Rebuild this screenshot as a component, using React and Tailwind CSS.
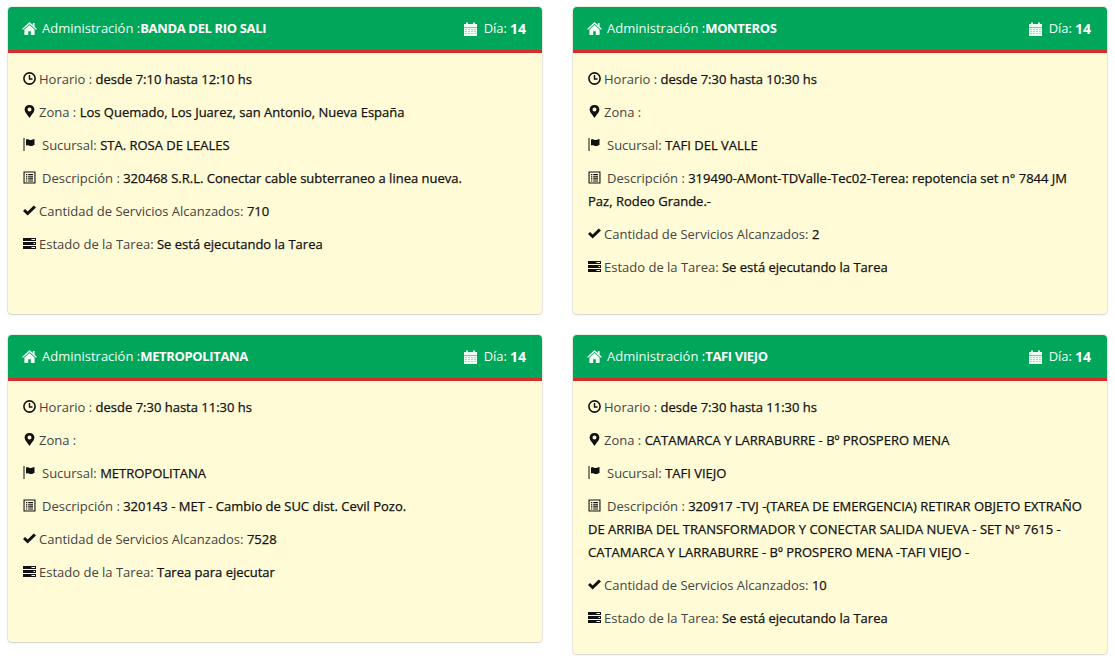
import React from 'react';

const Home = () => (
  <svg width="15" height="13" viewBox="0 0 15 13" className="shrink-0" fill="currentColor">
    <path d="M7.5 0 L10.8 3 V1 H12.6 V4.7 L15 6.9 L14 7.7 L7.5 1.9 L1 7.7 L0 6.9 Z" />
    <path d="M7.5 3 L12.6 7.6 V13 H8.8 V9.2 H6.2 V13 H2.4 V7.6 Z" />
  </svg>
);

const Calendar = () => (
  <svg width="13" height="14" viewBox="0 0 13 14" className="shrink-0">
    <path fill="currentColor" d="M0 2 H2 V0.5 H4 V2 H9 V0.5 H11 V2 H13 V5.2 H0 Z" />
    <path fill="currentColor" d="M0 5.8 H13 V14 H0 Z" />
    <path fill="#9fdcbc" d="M1 7 H3 V8 H1 Z M4 7 H6 V8 H4 Z M7 7 H9 V8 H7 Z M10 7 H12 V8 H10 Z M1 9 H3 V10 H1 Z M4 9 H6 V10 H4 Z M7 9 H9 V10 H7 Z M10 9 H12 V10 H10 Z M1 11 H3 V12 H1 Z M4 11 H6 V12 H4 Z M7 11 H9 V12 H7 Z M10 11 H12 V12 H10 Z" />
  </svg>
);

const Clock = () => (
  <svg width="13" height="13" viewBox="0 0 13 13" className="shrink-0" fill="none" stroke="currentColor">
    <circle cx="6.5" cy="6.5" r="5.6" strokeWidth="1.6" />
    <path d="M6.5 3 V7 H9.5" strokeWidth="1.4" />
  </svg>
);

const Marker = () => (
  <svg width="13" height="13" viewBox="0 0 13 13" className="shrink-0" fill="currentColor">
    <path fillRule="evenodd" d="M6.5 0 C9.4 0 11.4 2 11.4 4.6 C11.4 7.4 8 10.4 6.5 13 C5 10.4 1.6 7.4 1.6 4.6 C1.6 2 3.6 0 6.5 0 Z M6.5 2.6 A2 2 0 1 0 6.5 6.6 A2 2 0 1 0 6.5 2.6 Z" />
  </svg>
);

const Flag = () => (
  <svg width="13" height="13" viewBox="0 0 13 13" className="shrink-0" fill="currentColor">
    <path d="M0.5 0 H1.5 V13 H0.5 Z" />
    <path d="M3 1.5 C5 0.6 6.5 2.2 8 2 C9.3 1.9 10 1.3 11.5 1 V7 C10 7.5 9.3 8 8 8 C6.5 8.1 5 6.6 3 7.5 Z" />
  </svg>
);

const ListAlt = () => (
  <svg width="13" height="13" viewBox="0 0 13 13" className="shrink-0" fill="currentColor">
    <path fillRule="evenodd" d="M0.5 0.5 H12.5 V12.5 H0.5 Z M1.6 1.6 V11.4 H11.4 V1.6 Z" />
    <path d="M3 3 H4.3 V4.2 H3 Z M5.2 3 H10 V4.2 H5.2 Z M3 5.2 H4.3 V6.4 H3 Z M5.2 5.2 H10 V6.4 H5.2 Z M3 7.3 H4.3 V8.5 H3 Z M5.2 7.3 H10 V8.5 H5.2 Z M3 9.4 H4.3 V10.4 H3 Z M5.2 9.4 H10 V10.4 H5.2 Z" />
  </svg>
);

const Check = () => (
  <svg width="13" height="13" viewBox="0 0 14 13" className="shrink-0" fill="currentColor">
    <path d="M0 7 L2.2 4.8 L5 7.6 L11.6 1.2 L14 3.4 L5 12 Z" />
  </svg>
);

const Tasks = () => (
  <svg width="13" height="13" viewBox="0 0 13 13" className="shrink-0" fill="currentColor">
    <path fillRule="evenodd" d="M0 1 H13 V4 H0 Z M8.5 2 V3 H12 V2 Z" />
    <path fillRule="evenodd" d="M0 5 H13 V8 H0 Z M10.5 6 V7 H12 V6 Z" />
    <path fillRule="evenodd" d="M0 9 H13 V12 H0 Z M8.5 10 V11 H12 V10 Z" />
  </svg>
);

const tareas = [
  {
    admin: 'BANDA DEL RIO SALI',
    horario: 'desde 7:10 hasta 12:10 hs',
    zona: 'Los Quemado, Los Juarez, san Antonio, Nueva España',
    sucursal: 'STA. ROSA DE LEALES',
    descripcion: '320468 S.R.L. Conectar cable subterraneo a linea nueva.',
    servicios: '710',
    estado: 'Se está ejecutando la Tarea',
  },
  {
    admin: 'MONTEROS',
    horario: 'desde 7:30 hasta 10:30 hs',
    zona: '',
    sucursal: 'TAFI DEL VALLE',
    descripcion: '319490-AMont-TDValle-Tec02-Terea: repotencia set n° 7844 JM Paz, Rodeo Grande.-',
    servicios: '2',
    estado: 'Se está ejecutando la Tarea',
  },
  {
    admin: 'METROPOLITANA',
    horario: 'desde 7:30 hasta 11:30 hs',
    zona: '',
    sucursal: 'METROPOLITANA',
    descripcion: '320143 - MET - Cambio de SUC dist. Cevil Pozo.',
    servicios: '7528',
    estado: 'Tarea para ejecutar',
  },
  {
    admin: 'TAFI VIEJO',
    horario: 'desde 7:30 hasta 11:30 hs',
    zona: 'CATAMARCA Y LARRABURRE - Bº PROSPERO MENA',
    sucursal: 'TAFI VIEJO',
    descripcion: '320917 -TVJ -(TAREA DE EMERGENCIA) RETIRAR OBJETO EXTRAÑO DE ARRIBA DEL TRANSFORMADOR Y CONECTAR SALIDA NUEVA - SET N° 7615 - CATAMARCA Y LARRABURRE - Bº PROSPERO MENA -TAFI VIEJO -',
    servicios: '10',
    estado: 'Se está ejecutando la Tarea',
  },
];

function Row({ icon, label, value, wide }) {
  return (
    <p className="mb-[10px] leading-[23px] text-[#444]">
      <span className="inline-block align-[-1px] text-[#111] mr-[3px]">{icon}</span>
      <span className={wide ? 'ml-[3px]' : ''}>{label}</span> <span className="text-[#111] [-webkit-text-stroke:0.25px_#111]">{value}</span>
    </p>
  );
}

function TareaCard({ tarea }) {
  return (
    <div className="min-h-[307px] bg-[#fffbd6] rounded-[4px] shadow-[0_0_0_1px_rgba(200,200,170,0.3),0_1px_2px_rgba(0,0,0,0.15)] overflow-hidden">
      <div className="flex items-center justify-between h-[46px] pl-[14px] pr-[16px] bg-[#00a65a] border-b-[3px] border-[#d82c2c] text-[#f0fff6]">
        <div className="flex items-center">
          <Home />
          <span className="ml-[5px]">Administración :</span>
          <span className="font-bold tracking-[-0.35px] text-white">{tarea.admin}</span>
        </div>
        <div className="flex items-center">
          <Calendar />
          <span className="ml-[7px]">Día:</span>
          <span className="ml-[3px] font-bold text-[14px] text-white">14</span>
        </div>
      </div>
      <div className="px-[15px] pt-[15px] pb-[14px]">
        <Row icon={<Clock />} label="Horario :" value={tarea.horario} />
        <Row icon={<Marker />} label="Zona :" value={tarea.zona} />
        <Row icon={<Flag />} label="Sucursal:" value={tarea.sucursal} wide />
        <Row icon={<ListAlt />} label="Descripción :" value={tarea.descripcion} wide />
        <Row icon={<Check />} label="Cantidad de Servicios Alcanzados:" value={tarea.servicios} />
        <Row icon={<Tasks />} label="Estado de la Tarea:" value={tarea.estado} />
      </div>
    </div>
  );
}

export default function App() {
  return (
    <div className="min-h-[664px] bg-white pt-[7px] pl-[8px] text-[13px] font-['Open_Sans',sans-serif]">
      <div className="grid grid-cols-[534px_534px] gap-x-[31px] gap-y-[21px] items-start">
        {tareas.map((tarea) => (
          <TareaCard key={tarea.admin} tarea={tarea} />
        ))}
      </div>
    </div>
  );
}
